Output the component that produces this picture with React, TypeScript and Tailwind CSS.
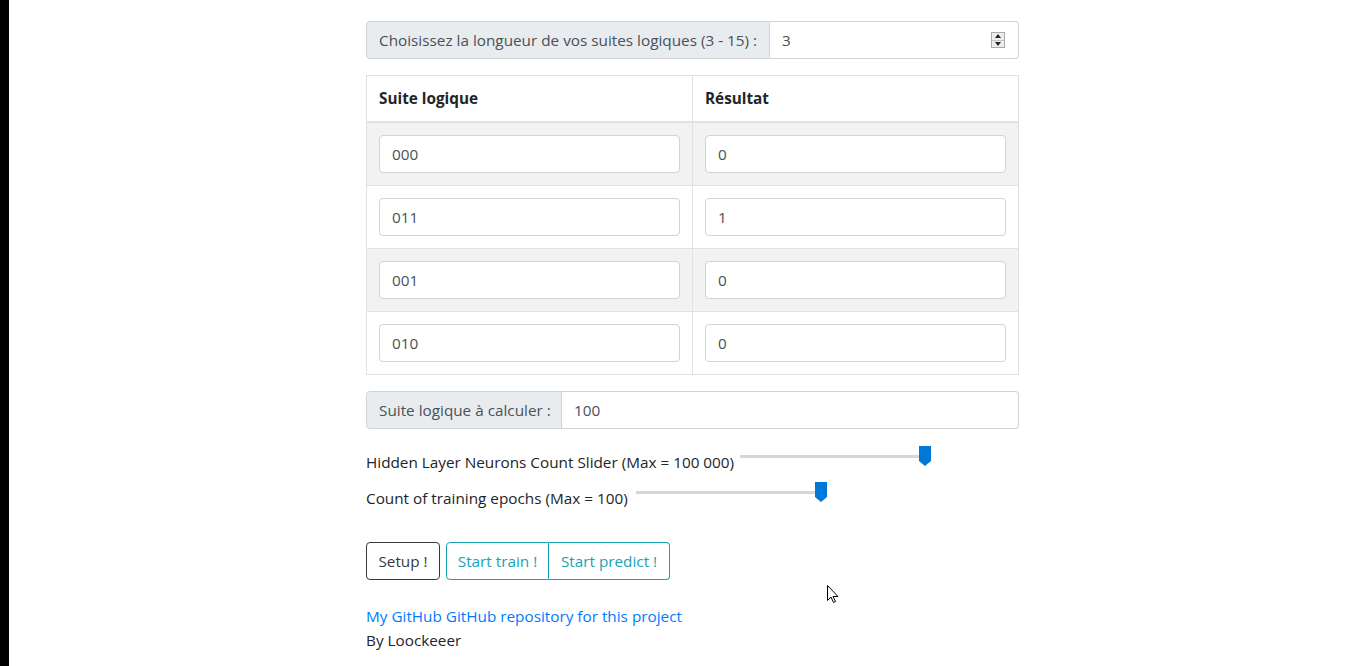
import React from "react";

const rows = [
  { suite: "000", res: "0" },
  { suite: "011", res: "1" },
  { suite: "001", res: "0" },
  { suite: "010", res: "0" },
];

function Slider({ width, thumb }: { width: number; thumb: number }) {
  return (
    <div className="relative h-6 shrink-0" style={{ width }}>
      <div className="absolute left-0 right-0 top-[5px] h-[3px] bg-[#d6d6d6]" />
      <svg
        className="absolute top-[-4px]"
        style={{ left: thumb - 6 }}
        width="12"
        height="20"
        viewBox="0 0 12 20"
      >
        <path d="M0 0 H12 V15 L6 20 L0 15 Z" fill="#0078d7" />
      </svg>
    </div>
  );
}

export default function App() {
  return (
    <div className="relative flex h-[666px] overflow-hidden bg-white font-['Open_Sans',sans-serif] text-[15.3px] leading-6 text-[#212529]">
      <div className="w-[9px] shrink-0 bg-black" />
      <div className="ml-[357px] w-[653px] pt-[21px]">
        {/* ─── Longueur ─── */}
        <div className="flex h-[38px]">
          <div className="flex w-[404px] items-center whitespace-nowrap rounded-l border border-[#ced4da] bg-[#e9ecef] px-3 text-[#495057]">
            Choisissez la longueur de vos suites logiques (3 - 15) :
          </div>
          <div className="flex flex-1 items-center justify-between rounded-r border border-l-0 border-[#ced4da] bg-white pl-3 pr-[13px] text-[#495057]">
            <span>3</span>
            <div className="flex h-[16px] w-[14px] flex-col border border-[#a9a9a9] bg-[#ededed]">
              <div className="flex flex-1 items-center justify-center border-b border-[#c4c4c4]">
                <svg width="6" height="4" viewBox="0 0 6 4"><path d="M3 0 L6 4 H0 Z" fill="#222" /></svg>
              </div>
              <div className="flex flex-1 items-center justify-center">
                <svg width="6" height="4" viewBox="0 0 6 4"><path d="M0 0 H6 L3 4 Z" fill="#222" /></svg>
              </div>
            </div>
          </div>
        </div>

        {/* ─── Table ─── */}
        <table className="mt-4 w-full border-collapse border border-[#dee2e6]">
          <thead>
            <tr>
              <th className="w-[326px] border border-b-2 border-[#dee2e6] px-3 pt-[10px] pb-[11px] text-left font-bold">Suite logique</th>
              <th className="border border-b-2 border-[#dee2e6] px-3 pt-[10px] pb-[11px] text-left font-bold">Résultat</th>
            </tr>
          </thead>
          <tbody>
            {rows.map((r, i) => (
              <tr key={i} className={i % 2 === 0 ? "bg-[#f2f2f2]" : "bg-white"}>
                <td className="border border-[#dee2e6] p-3">
                  <div className="flex h-[38px] items-center rounded border border-[#ced4da] bg-white px-3 text-[#495057]">{r.suite}</div>
                </td>
                <td className="border border-[#dee2e6] p-3">
                  <div className="flex h-[38px] items-center rounded border border-[#ced4da] bg-white px-3 text-[#495057]">{r.res}</div>
                </td>
              </tr>
            ))}
          </tbody>
        </table>

        {/* ─── Suite à calculer ─── */}
        <div className="mt-4 flex h-[38px]">
          <div className="flex w-[196px] items-center whitespace-nowrap rounded-l border border-[#ced4da] bg-[#e9ecef] px-3 text-[#495057]">
            Suite logique à calculer :
          </div>
          <div className="flex flex-1 items-center rounded-r border border-l-0 border-[#ced4da] bg-white px-3 text-[#495057]">100</div>
        </div>

        {/* ─── Sliders ─── */}
        <div className="mt-[21px] flex items-start">
          <span className="w-[374px] shrink-0 whitespace-nowrap">Hidden Layer Neurons Count Slider (Max = 100 000)</span>
          <Slider width={191} thumb={185} />
        </div>
        <div className="mt-3 flex items-start">
          <span className="w-[270px] shrink-0 whitespace-nowrap">Count of training epochs (Max = 100)</span>
          <Slider width={191} thumb={185} />
        </div>

        {/* ─── Buttons ─── */}
        <div className="mt-8 flex">
          <button className="h-[38px] w-[74px] rounded border border-[#343a40] text-[#343a40]">Setup !</button>
          <div className="ml-[6px] flex">
            <button className="h-[38px] w-[103px] rounded-l border border-[#17a2b8] text-[#17a2b8]">Start train !</button>
            <button className="h-[38px] w-[121px] rounded-r border border-l-0 border-[#17a2b8] text-[#17a2b8]">Start predict !</button>
          </div>
        </div>

        <div className="mt-6">
          <a className="text-[#007bff]">My GitHub GitHub repository for this project</a>
          <div>By Loockeeer</div>
        </div>
      </div>

      {/* cursor */}
      <svg className="absolute left-[827px] top-[585px]" width="12" height="19" viewBox="0 0 12 19">
        <path d="M0.5 0.5 V15.5 L4 12 L6.5 17.5 L8.5 16.5 L6 11.5 H11 Z" fill="white" stroke="black" strokeWidth="1" strokeLinejoin="round" />
      </svg>
    </div>
  );
}
